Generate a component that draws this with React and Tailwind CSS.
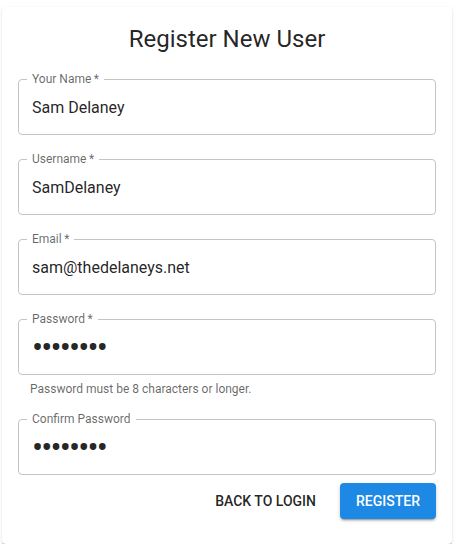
import { useState } from "react";

const Field = ({ label, value, type = "text", required = true, helper }) => {
  const [val, setVal] = useState(value);
  const isPassword = type === "password";
  return (
    <div className="flex flex-col">
      <div className="relative h-14 rounded border border-[#c4c4c4]">
        <span className="absolute -top-[9px] left-[8px] bg-white px-[5px] text-[12px] leading-4 text-black/60">
          {label}
          {required && "\u2009*"}
        </span>
        <input
          type={type}
          value={val}
          onChange={(e) => setVal(e.target.value)}
          className={
            isPassword
              ? "h-[54px] w-full bg-transparent px-[13px] text-[33px] leading-[23px] tracking-[-1.9px] text-black/87 outline-none"
              : "h-[54px] w-full bg-transparent px-[13px] text-base leading-[23px] text-black/87 outline-none"
          }
        />
      </div>
      {helper && (
        <p className="mt-1 ml-3 text-[12px] leading-5 text-black/60">{helper}</p>
      )}
    </div>
  );
};

export default function App() {
  return (
    <div className="bg-white pt-[7px] pl-[2px] font-['Roboto',sans-serif]">
      <div className="w-[450px] rounded bg-white px-4 pt-4 pb-[25px] shadow-[0_2px_1px_-1px_rgba(0,0,0,0.2),0_1px_1px_0_rgba(0,0,0,0.14),0_1px_3px_0_rgba(0,0,0,0.12)]">
        <h1 className="text-center text-[24px] leading-8 text-black/87">
          Register New User
        </h1>
        <div className="mt-6 flex flex-col gap-6">
          <Field label="Your Name" value="Sam Delaney" />
          <Field label="Username" value="SamDelaney" />
          <Field label="Email" value="sam@thedelaneys.net" />
          <div className="flex flex-col gap-5">
            <Field
              label="Password"
              type="password"
              value="password"
              helper="Password must be 8 characters or longer."
            />
            <Field
              label="Confirm Password"
              type="password"
              value="password"
              required={false}
            />
          </div>
        </div>
        <div className="mt-2 flex justify-end gap-4">
          <button
            type="button"
            className="h-9 rounded px-2 text-sm font-medium text-black/87 uppercase"
          >
            Back to Login
          </button>
          <button
            type="button"
            className="h-9 w-24 rounded bg-[#1e88e5] text-sm font-medium text-white uppercase shadow-[0_3px_1px_-2px_rgba(0,0,0,0.2),0_2px_2px_0_rgba(0,0,0,0.14),0_1px_5px_0_rgba(0,0,0,0.12)]"
          >
            Register
          </button>
        </div>
      </div>
    </div>
  );
}
